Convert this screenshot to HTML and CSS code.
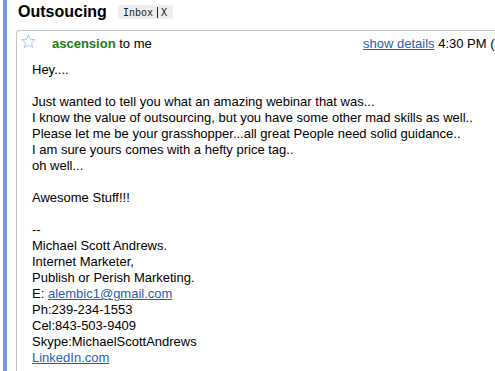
FILE: index.html
```html
<!DOCTYPE html>
<html lang="en">
  <head>
    <meta charset="UTF-8">
    <title>Outsoucing</title>
    <link rel="stylesheet" href="styles.css">
  </head>
  <body>
    <div class="page">
      <div class="rail"></div>
      <div class="main">
        <div class="subject">
          <h1 class="title">Outsoucing</h1>
          <span class="label">Inbox<span class="label-sep"></span>X</span>
        </div>
        <div class="card">
          <div class="msg-head">
            <svg class="star" width="15" height="15" viewBox="0 0 15 15">
              <polygon points="7.5,0.8 9.4,5.3 14.2,5.6 10.5,8.8 11.7,13.6 7.5,11 3.3,13.6 4.5,8.8 0.8,5.6 5.6,5.3" fill="none" stroke="#a9c4ef" stroke-width="1"/>
            </svg>
            <div class="sender"><b class="from">ascension</b> to me</div>
            <div class="when"><a href="#">show details</a> 4:30 PM (2 hours ago)</div>
          </div>
          <div class="msg-body">
            Hey....<br>
            <br>
            Just wanted to tell you what an amazing webinar that was...<br>
            I know the value of outsourcing, but you have some other mad skills as well..<br>
            Please let me be your grasshopper...all great People need solid guidance..<br>
            I am sure yours comes with a hefty price tag..<br>
            oh well...<br>
            <br>
            Awesome Stuff!!!<br>
            <br>
            --<br>
            Michael Scott Andrews.<br>
            Internet Marketer,<br>
            Publish or Perish Marketing.<br>
            E: <a href="#">alembic1@gmail.com</a><br>
            Ph:239-234-1553<br>
            Cel:843-503-9409<br>
            Skype:MichaelScottAndrews<br>
            <a href="#">LinkedIn.com</a>
          </div>
        </div>
      </div>
    </div>
  </body>
</html>
```
FILE: styles.css
```css
body {
  margin: 0;
  font-family: "Liberation Sans", Arial, sans-serif;
  font-size: 13px;
  color: #000;
  background: #fff;
}
a {
  color: #2a5db0;
}
.page {
  display: flex;
  height: 371px;
  overflow: hidden;
}
.rail {
  flex: none;
  width: 4px;
  margin-left: 3px;
  background-color: #7096e0;
}
.main {
  flex: 1;
  padding-left: 9px;
  min-width: 0;
}
.subject {
  display: flex;
  align-items: center;
  height: 30px;
  padding-left: 2px;
}
.title {
  margin: 0;
  font-size: 16px;
  font-weight: bold;
  line-height: 20px;
  margin-top: -6px;
}
.label {
  display: flex;
  align-items: center;
  margin-left: 11px;
  margin-top: -6px;
  height: 14px;
  padding: 0 6px 0 5px;
  background-color: #eeeeee;
  border-radius: 2px;
  font-family: "DejaVu Sans Mono", monospace;
  font-size: 10px;
  color: #222;
}
.label-sep {
  display: inline-block;
  width: 1px;
  height: 11px;
  background-color: #222;
  margin: 0 3px 0 4px;
}
.card {
  border-top: 1px solid #c3c3c3;
  border-left: 1px solid #c3c3c3;
  border-top-left-radius: 4px;
  height: 340px;
}
.msg-head {
  display: flex;
  align-items: center;
  height: 22px;
  padding-top: 1px;
  white-space: nowrap;
  overflow: hidden;
}
.star {
  flex: none;
  margin-left: 4px;
  margin-top: -3px;
}
.sender {
  flex: none;
  width: 311px;
  padding-left: 16px;
}
.from {
  color: #1a7a1a;
}
.when {
  flex: none;
}
.msg-body {
  padding: 8px 0 0 15px;
  line-height: 16px;
}
```
